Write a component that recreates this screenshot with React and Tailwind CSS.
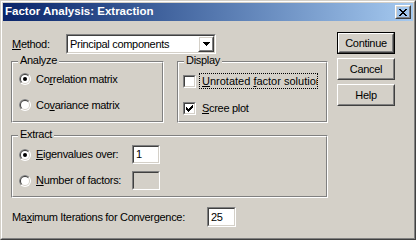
const TXT = "font-['Liberation_Sans',Arial,sans-serif] text-[11px] tracking-[-0.3px] text-black";

function Raised({ className = "", innerClassName = "", children }) {
  return (
    <div className={`border border-t-white border-l-white border-r-[#404040] border-b-[#404040] ${className}`}>
      <div className={`h-full w-full border border-t-[#d4d0c8] border-l-[#d4d0c8] border-r-[#808080] border-b-[#808080] ${innerClassName}`}>
        {children}
      </div>
    </div>
  );
}

function Sunken({ className = "", innerClassName = "", children }) {
  return (
    <div className={`border border-t-[#808080] border-l-[#808080] border-r-white border-b-white ${className}`}>
      <div className={`h-full w-full border border-t-[#404040] border-l-[#404040] border-r-[#d4d0c8] border-b-[#d4d0c8] ${innerClassName}`}>
        {children}
      </div>
    </div>
  );
}

function Group({ label, className = "", children }) {
  return (
    <div className={`relative border border-t-[#808080] border-l-[#808080] border-r-white border-b-white ${className}`}>
      <div className="h-full w-full border border-t-white border-l-white border-r-[#808080] border-b-[#808080]">
        {children}
      </div>
      <span className="absolute -top-[8px] left-[6px] bg-[#d4d0c8] px-[2px] leading-[13px]">{label}</span>
    </div>
  );
}

function Radio({ checked }) {
  return (
    <svg width="12" height="12" viewBox="0 0 12 12" className="shrink-0">
      <circle cx="6" cy="6" r="6" fill="#ffffff" />
      <path d="M10.243 1.757 A6 6 0 0 0 1.757 10.243 Z" fill="#808080" />
      <circle cx="6" cy="6" r="5" fill="#d4d0c8" />
      <path d="M9.536 2.464 A5 5 0 0 0 2.464 9.536 Z" fill="#404040" />
      <circle cx="6" cy="6" r="4" fill="#ffffff" />
      {checked && <circle cx="6" cy="6" r="2" fill="#000000" />}
    </svg>
  );
}

function Check({ checked }) {
  const px = [
    [6, 0], [5, 1], [6, 1], [0, 2], [4, 2], [5, 2], [6, 2],
    [0, 3], [1, 3], [3, 3], [4, 3], [5, 3],
    [0, 4], [1, 4], [2, 4], [3, 4], [4, 4],
    [1, 5], [2, 5], [3, 5], [2, 6],
  ];
  return (
    <Sunken className="h-[13px] w-[13px] shrink-0" innerClassName="bg-white flex items-center justify-center">
      {checked && (
        <svg width="7" height="7" viewBox="0 0 7 7" shapeRendering="crispEdges">
          {px.map(([x, y]) => (
            <rect key={`${x}-${y}`} x={x} y={y} width="1" height="1" fill="#000" />
          ))}
        </svg>
      )}
    </Sunken>
  );
}

function CloseGlyph() {
  const rows = ["XX....XX", ".XX..XX.", "..XXXX..", "...XX...", "..XXXX..", ".XX..XX.", "XX....XX"];
  return (
    <svg width="8" height="7" viewBox="0 0 8 7" shapeRendering="crispEdges">
      {rows.flatMap((r, y) =>
        r.split("").map((c, x) => (c === "X" ? <rect key={`${x}-${y}`} x={x} y={y} width="1" height="1" fill="#000" /> : null))
      )}
    </svg>
  );
}

function U({ children }) {
  return <span className="underline underline-offset-[1px]">{children}</span>;
}

function Button({ children, isDefault }) {
  const body = (
    <Raised className="h-full w-full" innerClassName="flex items-center justify-center">
      {children}
    </Raised>
  );
  return isDefault ? (
    <div className="h-[22px] w-[58px] border border-black">{body}</div>
  ) : (
    <div className="h-[22px] w-[58px]">{body}</div>
  );
}

export default function App() {
  return (
    <div className={`h-[240px] w-[416px] bg-[#d4d0c8] ${TXT}`}>
      <div className="h-full w-full border border-t-[#d4d0c8] border-l-[#d4d0c8] border-r-[#404040] border-b-[#404040]">
        <div className="flex h-full w-full flex-col border border-t-white border-l-white border-r-[#808080] border-b-[#808080] p-px">
          {/* title bar */}
          <div className="flex h-[18px] items-center justify-between bg-linear-to-r from-[#0a246a] to-[#a6caf0] pl-[2px] pr-[2px]">
            <span className="text-[11.5px] font-bold tracking-normal text-white">Factor Analysis: Extraction</span>
            <Raised className="h-[14px] w-[16px]" innerClassName="flex items-center justify-center">
              <CloseGlyph />
            </Raised>
          </div>

          {/* body */}
          <div className="flex flex-1">
            <div className="ml-[8px] flex w-[317px] flex-col pt-[13px]">
              <div className="flex h-[20px] items-center">
                <span className="ml-px w-[54px]">
                  <U>M</U>ethod:
                </span>
                <Sunken className="h-[20px] w-[150px]" innerClassName="bg-white flex items-center justify-between pl-[2px]">
                  <span>Principal components</span>
                  <Raised className="h-[16px] w-[16px]" innerClassName="flex items-center justify-center">
                    <svg width="7" height="4" viewBox="0 0 7 4" shapeRendering="crispEdges">
                      <rect x="0" y="0" width="7" height="1" fill="#000" />
                      <rect x="1" y="1" width="5" height="1" fill="#000" />
                      <rect x="2" y="2" width="3" height="1" fill="#000" />
                      <rect x="3" y="3" width="1" height="1" fill="#000" />
                    </svg>
                  </Raised>
                </Sunken>
              </div>

              <div className="mt-[7px] flex">
                <Group label="Analyze" className="h-[62px] w-[153px]">
                  <div className="flex flex-col gap-[10px] pl-[6px] pt-[8px]">
                    <div className="flex h-[16px] items-center gap-[5px]">
                      <Radio checked />
                      <span>
                        Co<U>r</U>relation matrix
                      </span>
                    </div>
                    <div className="flex h-[16px] items-center gap-[5px]">
                      <Radio />
                      <span>
                        Co<U>v</U>ariance matrix
                      </span>
                    </div>
                  </div>
                </Group>
                <Group label="Display" className="ml-[13px] h-[62px] w-[151px]">
                  <div className="flex flex-col gap-[11px] pl-[4px] pt-[10px]">
                    <div className="flex h-[16px] items-center">
                      <Check />
                      <span className="ml-[3px] h-[16px] w-[119px] overflow-hidden whitespace-nowrap border border-dotted border-black pl-[2px] leading-[14px] tracking-normal">
                        <U>U</U>nrotated <U>f</U>actor solution
                      </span>
                    </div>
                    <div className="flex h-[16px] items-center">
                      <Check checked />
                      <span className="ml-[6px]">
                        <U>S</U>cree plot
                      </span>
                    </div>
                  </div>
                </Group>
              </div>

              <Group label="Extract" className="mt-[12px] h-[63px] w-[317px]">
                <div className="flex flex-col gap-[7px] pl-[6px] pt-[8px]">
                  <div className="flex h-[19px] items-center">
                    <Radio checked />
                    <span className="ml-[5px] w-[96px]">
                      <U>E</U>igenvalues over:
                    </span>
                    <Sunken className="h-[19px] w-[28px]" innerClassName="bg-white pl-[2px] leading-[15px]">
                      1
                    </Sunken>
                  </div>
                  <div className="flex h-[19px] items-center">
                    <Radio />
                    <span className="ml-[5px] w-[96px]">
                      <U>N</U>umber of factors:
                    </span>
                    <Sunken className="h-[19px] w-[28px]" innerClassName="bg-[#d4d0c8]" />
                  </div>
                </div>
              </Group>

              <div className="mt-[9px] flex h-[20px] items-center">
                <span className="ml-px w-[195px]">
                  Ma<U>x</U>imum Iterations for Convergence:
                </span>
                <Sunken className="h-[20px] w-[29px]" innerClassName="bg-white pl-[2px] leading-[16px]">
                  25
                </Sunken>
              </div>
            </div>

            <div className="ml-[9px] flex flex-col gap-[4px] pt-[11px]">
              <Button isDefault>Continue</Button>
              <Button>Cancel</Button>
              <Button>Help</Button>
            </div>
          </div>
        </div>
      </div>
    </div>
  );
}
